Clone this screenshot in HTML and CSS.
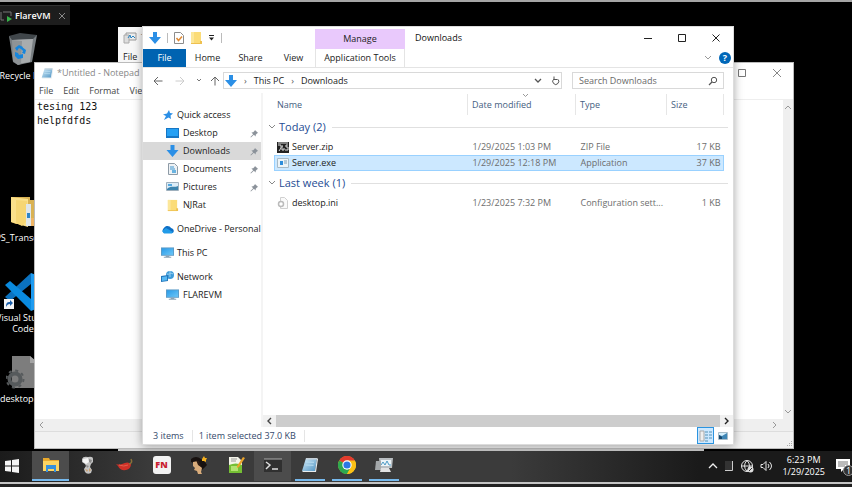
FILE: index.html
```html
<!DOCTYPE html>
<html lang="en">
<head>
<meta charset="utf-8">
<title>FlareVM</title>
<link rel="stylesheet" href="styles.css">
</head>
<body>
<svg class="defs" aria-hidden="true">
  <defs>
    <linearGradient id="sky" x1="0" y1="0" x2="1" y2="1"><stop offset="0" stop-color="#2a9be8"/><stop offset="1" stop-color="#6cc6f7"/></linearGradient>
    <linearGradient id="page" x1="0" y1="0" x2="1" y2="1"><stop offset="0" stop-color="#d5ecf8"/><stop offset="1" stop-color="#4f94c4"/></linearGradient>
    <symbol id="down" viewBox="0 0 12 12"><path d="M4 0h4v5h4L6 12 0 5h4z" fill="#2b8fe6"/></symbol>
    <symbol id="folder" viewBox="0 0 12 14"><path d="M1 1h10v12H1z" fill="#fbdc78"/><path d="M1 1h3v12H1z" fill="#fce79a"/><path d="M10 10h2v3H1v-1h9z" fill="#eec04f"/></symbol>
    <symbol id="pin" viewBox="0 0 10 10"><path d="M5.500 1 9 4.500l-1 .3-1.600 1.600-.2 2L4.300 6.500 1 9.500.5 9l3-3.300L1.600 3.800l2-.2L5.200 2z" fill="#8b929a"/></symbol>
    <symbol id="pc" viewBox="0 0 14 12"><path d="M0 0h14v9H0z" fill="#5c9bc7"/><path d="M1 1h12v7H1z" fill="url(#sky)"/><path d="M5 9h4v1h2v1H3v-1h2z" fill="#8aa2b5"/></symbol>
    <symbol id="note" viewBox="0 0 18 18"><path d="M5 2h11l-2 13H1z" fill="url(#page)"/><path d="m16 2 1 1-2 13H2l-1-1h13z" fill="#e8edf0"/><path d="M5 2h11v1.500H5z" fill="#c6d0d8"/><path d="m5 6 8 .3M4.500 9l8 .3" stroke="#b9def2" fill="none"/></symbol>
  </defs>
</svg>

<div class="screen">
  <div class="vmtab">
    <svg width="12" height="12" viewBox="0 0 12 12"><path d="M4 10H1V2m2 0h8v4" fill="none" stroke="#777"/><path d="m7 6 5 3-5 3z" fill="#37b34a"/></svg>
    <span>FlareVM</span>
    <button class="x" aria-label="Close tab"><svg width="8" height="8" viewBox="0 0 8 8"><path d="m1 1 6 6m0-6L1 7" stroke="#888"/></svg></button>
  </div>

  <main class="desktop">
    <a href="#" class="shortcut s-bin">
      <svg width="30" height="32" viewBox="0 0 30 32"><path d="m1 3 28-1-5 27-14 3-5-3z" fill="#777d81"/><path d="m1 3 11-3 17 2-4 4-21 1z" fill="#40464a"/><path d="m4 7 21-1-3 23-12 2z" fill="#a8acae"/><path d="m4 7 10 1-1 23-3 1-5-4z" fill="#8e9396"/><path d="m7 15 4-3 4 2-2 2-2-1-2 3zm7-1 4 3-1 4-3-1 1-2-2-2zm-7 5 3 1 1 2 4-1v4l-5 1-3-3z" fill="#1685dc"/></svg>
      <span>Recycle Bin</span>
    </a>
    <a href="#" class="shortcut s-ps">
      <svg width="26" height="32" viewBox="0 0 26 32"><path d="M1 1h19v3h4v24H6L1 26z" fill="#d9b254"/><path d="m1 1 17 2v28L1 26z" fill="#fbe08a"/><path d="m6 4 11 1v20l-5 5-6-3z" fill="#f6d674"/><path d="M16 8h5v22h-5z" fill="#dfe6ea"/><path d="M17 17h3v5h-3z" fill="#2d85c7"/><path d="M21 22h4v8h-4z" fill="#efb565"/></svg>
      <span>PS_Transcri...</span>
    </a>
    <a href="#" class="shortcut s-code">
      <svg width="38" height="38" viewBox="0 0 38 38"><path d="m27 0 10 4v30l-10 4z" fill="#1e9bf0"/><path d="M27 0v11L6 28l-5-4z" fill="#0b72bf"/><path d="m1 12 5-4 21 18v12z" fill="#0a8ade"/><path d="M0 26h10v10H0z" fill="#f4f4f4"/><path d="M2 34c0-4 1-5 4-5v-2l3 3-3 3v-2c-2 0-3 1-4 3z" fill="#1b5faa"/></svg>
      <span>Visual Studio Code</span>
    </a>
    <a href="#" class="shortcut s-ini">
      <svg width="34" height="34" viewBox="0 0 34 34"><path d="M6 0h18l8 7v25H6z" fill="#7d7d7d"/><path d="M24 0v7h8z" fill="#a4a4a4"/><g fill="none" stroke="#565a5c"><circle cx="9" cy="23" r="5.500" stroke-width="4"/><circle cx="9" cy="23" r="8.500" stroke-width="2" stroke-dasharray="3 3.670"/></g></svg>
      <span>desktop.ini</span>
    </a>

    <section class="window back" aria-label="Task window">
      <div class="back-title"><svg width="14" height="12" viewBox="0 0 14 12"><path d="M3 1h10v7H3z" fill="#eee" stroke="#999"/><path d="M1 3h5v8H1z" fill="#ddd" stroke="#aaa"/><path d="m5 6 2-3 1 3 2-2 2 2" stroke="#2785c3" fill="none"/></svg><span>Task Manager</span></div>
      <div class="back-menu">File</div>
    </section>

    <section class="window notepad" aria-label="Notepad">
      <header class="np-title">
        <svg width="13" height="13"><use href="#note"/></svg>
        <span class="grow">*Untitled - Notepad</span>
        <button class="ctl" aria-label="Maximize"><svg width="10" height="10" viewBox="0 0 10 10"><path d="M1.500 1.500h7v7h-7z" fill="none" stroke="#777"/></svg></button>
        <button class="ctl" aria-label="Close"><svg width="10" height="10" viewBox="0 0 10 10"><path d="m1 1 8 8m0-8L1 9" stroke="#888"/></svg></button>
      </header>
      <nav class="np-menu"><button>File</button><button>Edit</button><button>Format</button><button>View</button></nav>
      <div class="np-body">
        <textarea aria-label="Text" spellcheck="false">tesing 123
helpfdfds</textarea>
        <div class="np-vbar"><svg width="8" height="6" viewBox="0 0 8 6"><path d="m1 5 3-3 3 3" fill="none" stroke="#999"/></svg><svg width="8" height="6" viewBox="0 0 8 6"><path d="m1 1 3 3 3-3" fill="none" stroke="#999"/></svg></div>
      </div>
      <div class="np-hbar"><svg width="6" height="8" viewBox="0 0 6 8"><path d="M5 1 2 4l3 3" fill="none" stroke="#999"/></svg><svg width="6" height="8" viewBox="0 0 6 8"><path d="m1 1 3 3-3 3" fill="none" stroke="#999"/></svg></div>
      <div class="np-status"><svg width="7" height="7" viewBox="0 0 7 7"><path d="M5 0h1v1H5zM3 2h1v1H3zm2 0h1v1H5zM1 4h1v1H1zm2 0h1v1H3zm2 0h1v1H5z" fill="#aaa"/></svg></div>
    </section>

    <section class="window explorer" aria-label="Downloads">
      <header class="ex-title">
        <div class="quick">
          <svg width="12" height="12"><use href="#down"/></svg>
          <i class="bar"></i>
          <svg width="10" height="12" viewBox="0 0 10 12"><path d="M.5.5h6l3 3v8h-9z" fill="#fff" stroke="#8c8c8c"/><path d="m2.500 6 2 2.500L8 4.500" fill="none" stroke="#e08a34" stroke-width="1.500"/></svg>
          <svg width="12" height="14"><use href="#folder"/></svg>
          <svg class="more" width="7" height="6" viewBox="0 0 7 6"><path d="M1 0h5v1H1zm0 2.500h5L3.500 5.500z" fill="#222"/></svg>
          <i class="bar"></i>
        </div>
        <div class="manage">Manage</div>
        <h1>Downloads</h1>
        <button class="ctl" aria-label="Minimize"><svg width="10" height="10" viewBox="0 0 10 10"><path d="M1 5.500h8" stroke="#222"/></svg></button>
        <button class="ctl" aria-label="Maximize"><svg width="10" height="10" viewBox="0 0 10 10"><path d="M1.500 1.500h7v7h-7z" fill="none" stroke="#222"/></svg></button>
        <button class="ctl" aria-label="Close"><svg width="10" height="10" viewBox="0 0 10 10"><path d="m1.500 1.500 7 7m0-7-7 7" stroke="#222"/></svg></button>
      </header>
      <nav class="ribbon">
        <button class="file">File</button><button>Home</button><button>Share</button><button>View</button><button class="tools">Application Tools</button>
        <span class="grow"></span>
        <svg width="8" height="6" viewBox="0 0 8 6"><path d="m1 1 3 3 3-3" fill="none" stroke="#999"/></svg>
        <button class="help" aria-label="Help">?</button>
      </nav>
      <div class="address">
        <button aria-label="Back"><svg width="10" height="10" viewBox="0 0 10 10"><path d="M9.500 5H1m4-4L1 5l4 4" fill="none" stroke="#666"/></svg></button>
        <button aria-label="Forward"><svg width="10" height="10" viewBox="0 0 10 10"><path d="M.5 5H9M5 1l4 4-4 4" fill="none" stroke="#ccc"/></svg></button>
        <button class="slim" aria-label="Recent"><svg width="6" height="5" viewBox="0 0 6 5"><path d="m1 1 2 2 2-2" fill="none" stroke="#777"/></svg></button>
        <button class="slim" aria-label="Up"><svg width="10" height="10" viewBox="0 0 10 10"><path d="M5 9.500V1M1 5l4-4 4 4" fill="none" stroke="#666"/></svg></button>
        <div class="path">
          <svg width="12" height="12"><use href="#down"/></svg>
          <b>›</b><a href="#">This PC</a><b>›</b><a href="#">Downloads</a>
          <span class="grow"></span>
          <svg width="8" height="6" viewBox="0 0 8 6"><path d="m1 1 3 3 3-3" fill="none" stroke="#555" stroke-width="1.300"/></svg>
          <button class="reload" aria-label="Refresh"><svg width="9" height="10" viewBox="0 0 9 10"><path d="M6.500 3A3 3 0 1 1 3 3M3 .5v3h3" fill="none" stroke="#555"/></svg></button>
        </div>
        <label class="search"><input type="text" placeholder="Search Downloads" aria-label="Search Downloads"><svg width="10" height="10" viewBox="0 0 10 10"><circle cx="6" cy="4" r="2.700" fill="none" stroke="#555"/><path d="M4 6 1 9" stroke="#555" stroke-width="1.300"/></svg></label>
      </div>
      <div class="ex-body">
        <nav class="tree">
          <a href="#" class="top"><svg width="10" height="10" viewBox="0 0 10 10"><path d="m6 0 1 3 3 .5-2.500 2L8 9 5.500 7.500 1 10l2-4L0 4.500l4-1z" fill="#2b8fe6"/></svg>Quick access</a>
          <a href="#"><svg width="13" height="10" viewBox="0 0 13 10"><path d="M0 0h13v10H0z" fill="#1676c4"/><path d="M1 1h11v7H1z" fill="#25a0f4"/></svg>Desktop<svg class="pin" width="9" height="9"><use href="#pin"/></svg></a>
          <a href="#" class="on"><svg width="13" height="12"><use href="#down"/></svg>Downloads<svg class="pin" width="9" height="9"><use href="#pin"/></svg></a>
          <a href="#"><svg width="13" height="12" viewBox="0 0 13 12"><path d="M2.500.5h6l3 3v8h-9z" fill="#eef2f5" stroke="#8e9ba6"/><path d="M4 4h4M4 6h5" stroke="#3b95d1"/><path d="M6 7h4v3H6z" fill="#6ab3e0"/></svg>Documents<svg class="pin" width="9" height="9"><use href="#pin"/></svg></a>
          <a href="#"><svg width="13" height="10" viewBox="0 0 13 10"><path d="M.5.5h12v8H.5z" fill="#dcecf7" stroke="#9fb0bd"/><path d="M1 7c4-4 6-1 11-3v4H1z" fill="#3c83ad"/><path d="M2 2h4v2H2z" fill="#54a8df"/></svg>Pictures<svg class="pin" width="9" height="9"><use href="#pin"/></svg></a>
          <a href="#"><svg width="13" height="13"><use href="#folder"/></svg>NJRat</a>
          <a href="#" class="top gap"><svg width="13" height="9" viewBox="0 0 13 9"><path d="M3 8a3 3 0 0 1 0-5c2-3 6-2 7 0 4 1 3 5 1 5z" fill="#0f6fc5"/><path d="m1 6 4-3 7 4-1 1.500H3z" fill="#229be8"/></svg>OneDrive - Personal</a>
          <a href="#" class="top gap"><svg width="13" height="12"><use href="#pc"/></svg>This PC</a>
          <a href="#" class="top gap"><svg width="13" height="12" viewBox="0 0 13 12"><circle cx="9" cy="4" r="4" fill="#3e9bd9"/><path d="M6 3c3 1 3-2 6 0M9 0v6" stroke="#9dd2f1" fill="none"/><path d="m0 5 7-1v6l-7 1z" fill="#2477bb"/><path d="m1 6 5-.7v4L1 10z" fill="#56b8f3"/></svg>Network</a>
          <a href="#"><svg width="13" height="12"><use href="#pc"/></svg>FLAREVM</a>
        </nav>
        <div class="files">
          <table>
            <colgroup><col><col class="c-date"><col class="c-type"><col class="c-size"></colgroup>
            <thead><tr><th>Name</th><th><svg class="sorted" width="7" height="4" viewBox="0 0 7 4"><path d="m1 0 2.500 2.500L6 0" fill="none" stroke="#999"/></svg>Date modified</th><th>Type</th><th>Size</th></tr></thead>
            <tbody>
              <tr class="group"><td colspan="4"><div><svg width="8" height="6" viewBox="0 0 8 6"><path d="m1 1 3 3 3-3" fill="none" stroke="#888"/></svg><span>Today (2)</span><hr></div></td></tr>
              <tr><td><div><svg width="12" height="11" viewBox="0 0 12 11"><path d="M0 0h12v11H0z" fill="#222"/><path d="M1 3h3v3L2 9M6 4H5v4h2V6m4-3H9v2h2v3H8M1 1h10" fill="none" stroke="#ddd"/></svg>Server.zip</div></td><td>1/29/2025 1:03 PM</td><td>ZIP File</td><td>17 KB</td></tr>
              <tr class="sel"><td><div><svg width="12" height="10" viewBox="0 0 12 10"><path d="M.5.5h11v9H.5z" fill="#edf4f8" stroke="#a8bac6"/><path d="M3 3h3v4H3z" fill="#2e8ddb"/><path d="M7 3h3M7 5h3" stroke="#7f9fb5"/></svg>Server.exe</div></td><td>1/29/2025 12:18 PM</td><td>Application</td><td>37 KB</td></tr>
              <tr class="group"><td colspan="4"><div><svg width="8" height="6" viewBox="0 0 8 6"><path d="m1 1 3 3 3-3" fill="none" stroke="#888"/></svg><span>Last week (1)</span><hr></div></td></tr>
              <tr><td><div><svg width="12" height="12" viewBox="0 0 12 12"><path d="M3.500.5h4l3 3v8h-7z" fill="#fafafa" stroke="#d0d0d0"/><circle cx="4" cy="7" r="2.500" fill="#fff" stroke="#bbb" stroke-width="1.500"/></svg>desktop.ini</div></td><td>1/23/2025 7:32 PM</td><td>Configuration sett...</td><td>1 KB</td></tr>
            </tbody>
          </table>
          <div class="ex-hbar"><svg width="6" height="8" viewBox="0 0 6 8"><path d="M5 1 2 4l3 3" fill="none" stroke="#444" stroke-width="1.400"/></svg><i></i><svg width="6" height="8" viewBox="0 0 6 8"><path d="m1 1 3 3-3 3" fill="none" stroke="#222" stroke-width="1.400"/></svg></div>
        </div>
      </div>
      <footer class="ex-status">
        <span>3 items</span><span>1 item selected 37.0 KB</span><span class="grow"></span>
        <button class="view active" aria-label="Details view"><svg width="14" height="12" viewBox="0 0 14 12"><path d="M1 1h4v10H1z" fill="#eee" stroke="#aaa"/><path d="M6 2h3m1 0h3M6 5h3m1 0h3M6 8h3m1 0h3M6 11h3" stroke="#5592b5"/></svg></button>
        <button class="view" aria-label="Large icons view"><svg width="10" height="8" viewBox="0 0 10 8"><path d="M.5.500h9v7h-9z" fill="#d5effc" stroke="#a8bdc8"/><path d="m1 3 3 1 5-3v6H1z" fill="#3f86b5"/><path d="m1 3 3 2v2H1z" fill="#17486f"/></svg></button>
      </footer>
    </section>
  </main>

  <footer class="taskbar">
    <button class="start" aria-label="Start"><svg width="14" height="14" viewBox="0 0 14 14"><path d="m0 2 6-.8v5.300H0zM7 1l7-1v6.500H7zM0 7.500h6v5.300L0 12zm7 0h7V14l-7-1z" fill="#f5f5f5"/></svg></button>
    <button class="app focus run" aria-label="File Explorer"><svg width="18" height="14" viewBox="0 0 18 14"><path d="M1 0h6l1 2h9v11H1z" fill="#e9a92c"/><path d="M1 3h16v10H1z" fill="#fcd462"/><path d="M4 7h10v7h-2v-3H6v3H4z" fill="#3690dc"/></svg></button>
    <button class="app" aria-label="Bust"><svg width="14" height="18" viewBox="0 0 14 18"><path d="M1 3q1-3 6-2 5-1 5 2v3l-2 2-1 3 2 3-1 3q-4 2-6-1l-1-3 2-3-1-2-3-2z" fill="#c4c4c4"/><path d="m2 3 5-1 1 4-3 2-3-2z" fill="#f4f4f4"/><path d="m8 3 3 1-1 3-2-1zM5 9l3 1-2 2z" fill="#8a8a8a"/><path d="m4 13 3 1-1 2zm4-1 2 2-2 2z" fill="#c9a06f"/></svg></button>
    <button class="app" aria-label="Pepper"><svg width="18" height="14" viewBox="0 0 18 14"><path d="M0 6q3 1 6 0 6-3 9 0 0 5-5 6-6 1-8-4z" fill="#cf3128"/><path d="M3 7q5 2 9 0" stroke="#e2604c" fill="none"/><path d="M13 6q4-1 2-5" stroke="#89713a" stroke-width="1.500" fill="none"/></svg></button>
    <button class="app" aria-label="FN"><span class="fn">FN</span></button>
    <button class="app" aria-label="Portrait"><svg width="18" height="18" viewBox="0 0 18 18"><path d="M1 3q5-4 10 0l4 3 2 3-3 3-2 2-2-2-3 2-1-6-5-2z" fill="#17110f"/><path d="m3 6 5-1 1 4 3 3-1 4 1 2H8l-1-3-3-1 1-2-2-2z" fill="#d9ac7b"/><path d="M6 4q4 1 5 7L8 9z" fill="#2a1a12"/><path d="m14 0 1 2 2 0-1 2 0 2-2-1-2 0 0-2z" fill="#f5b11f"/></svg></button>
    <button class="app" aria-label="Notepad++"><svg width="18" height="18" viewBox="0 0 18 18"><path d="M2 1h9l4 4v12H2z" fill="#f4f4e9"/><path d="M2 9q7-3 13 0v8H2z" fill="#75bf34"/><path d="M4 10h7v5H4z" fill="#b2e270"/><path d="M4 3h6M4 5h5" stroke="#999"/><path d="m16 1 2 1-6 9-2 1v-2z" fill="#e9a32b"/></svg></button>
    <button class="app hot" aria-label="Terminal"><svg width="18" height="15" viewBox="0 0 18 15"><path d="M0 1h18v13H0z" fill="#303030"/><path d="M0 1h18" stroke="#aaa"/><path d="m2 4 4 3-4 4M8 11h6" fill="none" stroke="#ddd" stroke-width="1.500"/></svg></button>
    <button class="app run" aria-label="Notepad"><svg width="18" height="18"><use href="#note"/></svg></button>
    <button class="app run" aria-label="Chrome"><svg width="18" height="18" viewBox="0 0 18 18"><circle cx="9" cy="9" r="9" fill="#fbc116"/><path d="M9 9 1.200 4.500A9 9 0 0 1 16.800 4.500z" fill="#e33b2e"/><path d="M9 9 1.200 4.500A9 9 0 0 0 9 18l4-7z" fill="#2da94f"/><path d="M9 4.500h7.800A9 9 0 0 1 9 18l4-7z" fill="#fbc116"/><circle cx="9" cy="9" r="4.700" fill="#fff"/><circle cx="9" cy="9" r="3.600" fill="#2a78e4"/></svg></button>
    <button class="app run" aria-label="Monitor"><svg width="18" height="16" viewBox="0 0 18 16"><path d="M4 1h14l-1 10H5z" fill="#b9bec1"/><path d="M6 3h10v6H6z" fill="#edf4f7"/><path d="m6 8 2-3 2 3 2-4 2 4h2" fill="none" stroke="#4d9bc5"/><path d="M1 4h5v9H0z" fill="#a4a8aa"/><path d="M6 11h8l2 4H5z" fill="#e2e2e2"/></svg></button>
    <span class="grow"></span>
    <div class="tray">
      <svg width="10" height="8" viewBox="0 0 10 8"><path d="m1 6 4-4 4 4" fill="none" stroke="#eee" stroke-width="1.300"/></svg>
      <svg width="10" height="12" viewBox="0 0 10 12"><path d="M1 10.500h7.500V1" fill="none" stroke="#ccc"/><path d="M1 1h7v9H1z" fill="#333"/></svg>
      <svg width="14" height="14" viewBox="0 0 14 14"><g fill="none" stroke="#e5e5e5"><circle cx="7" cy="7" r="5.500"/><path d="M1.500 7h11M7 1.500q-5 5 0 11M7 1.500q5 5 0 11"/></g><circle cx="10.500" cy="10.500" r="3" fill="#ddd"/><path d="m9 12 3-3" stroke="#333"/></svg>
      <svg width="13" height="12" viewBox="0 0 13 12"><path d="M1 4.500h2l3-3v9l-3-3H1zM8 4q2 2 0 4m1.500-6q4 4 0 8" fill="none" stroke="#e5e5e5"/></svg>
      <time>6:23 PM<br>1/29/2025</time>
      <button class="notify" aria-label="1 notification"><svg width="14" height="14" viewBox="0 0 14 14"><path d="M0 0h14v10H8l-3 3v-3H0z" fill="#fff"/><path d="M2 3h10M2 5h10M2 7h7" stroke="#777"/></svg><span>1</span></button>
    </div>
  </footer>
</div>
</body>
</html>
```
FILE: styles.css
```css
* { box-sizing: border-box; }
body { margin: 0; background: #000; font: 9px/12px "Open Sans", "Noto Sans", sans-serif; color: #222; }
button { border: 0; padding: 0; background: none; font: inherit; color: inherit; display: flex; align-items: center; justify-content: center; }
a { color: inherit; text-decoration: none; }
svg { flex: none; display: block; }
.defs { position: absolute; width: 0; height: 0; }
.grow { flex: 1; }
.screen { min-height: 100vh; display: flex; flex-direction: column; border-top: 2px solid #a5a5a5; position: relative; overflow: hidden; }
.vmtab { position: absolute; top: 3px; left: 0; display: flex; align-items: center; gap: 3px; height: 20px; background: #1d1d1d; border-top: 1px solid #333; color: #fff; font-weight: 600; }
.vmtab .x { width: 16px; }
.desktop { flex: 1; position: relative; }

.shortcut { position: absolute; left: -14px; width: 74px; display: flex; flex-direction: column; align-items: center; gap: 4px; color: #fff; text-align: center; line-height: 11px; }
.s-bin { top: 31px; gap: 5px; }
.s-ps { top: 194px; }
.s-code { top: 271px; gap: 1px; }
.s-ini { top: 354px; gap: 3px; }

.window { position: absolute; background: #fff; display: flex; flex-direction: column; }
.back { left: 118px; right: 148px; top: 25px; bottom: 0; background: #c8c8c8; }
.back-title, .back-menu { background: #f7f7f7; display: flex; align-items: center; padding-left: 5px; }
.back-title { height: 22px; gap: 4px; color: #888; }
.back-menu { height: 16px; }

.notepad { left: 34px; right: 58px; top: 60px; bottom: 2px; border: 1px solid #bbb; }
.np-title { height: 20px; display: flex; align-items: center; padding-left: 6px; gap: 3px; color: #888; }
.np-title .ctl { width: 32px; }
.np-menu { height: 17px; display: flex; align-items: center; gap: 10px; padding-left: 4px; border-bottom: 1px solid #eee; color: #444; }
.np-body { flex: 1; display: flex; }
.np-body textarea { flex: 1; border: 0; padding: 0 2px; resize: none; outline: 0; font: 10px/14px "DejaVu Sans Mono", monospace; color: #111; }
.np-vbar { width: 10px; background: #efefef; display: flex; flex-direction: column; justify-content: space-between; align-items: center; padding: 4px 0; }
.np-hbar { height: 12px; background: #efefef; display: flex; justify-content: space-between; align-items: center; padding: 0 15px 0 3px; }
.np-status { height: 17px; background: #f1f1f1; border-top: 1px solid #ddd; display: flex; justify-content: flex-end; align-items: flex-end; }

.ctl { width: 34px; height: 20px; }
.explorer { left: 142px; right: 118px; top: 24px; bottom: 6px; border: 1px solid #dcdcdc; box-shadow: 0 1px 9px rgba(0, 0, 0, 0.35); }
.ex-title { display: flex; height: 22px; align-items: center; }
.quick { width: 172px; display: flex; align-items: center; gap: 6px; padding-left: 6px; }
.bar { width: 1px; height: 10px; background: #bbb; }
.manage { width: 90px; align-self: stretch; margin-top: 2px; background: #e9c9fc; display: flex; align-items: center; justify-content: center; }
.ex-title h1 { flex: 1; margin: 0; padding-left: 10px; font: inherit; color: #111; }
.ribbon { display: flex; height: 19px; align-items: stretch; border-bottom: 1px solid #e4e4e4; }
.ribbon > svg { align-self: center; }
.ribbon button { width: 43px; }
.ribbon .file { width: 43px; background: #0063b1; color: #fff; }
.ribbon .tools { width: 90px; border: solid #e4e4e4; border-width: 0 1px; }
.ribbon .help { width: 12px; height: 12px; border-radius: 6px; background: #0067b8; color: #fff; font-weight: 700; align-self: center; margin: 0 2px 0 7px; }
.address { display: flex; height: 25px; align-items: center; padding: 0 9px 0 4px; }
.address > button { width: 22px; height: 18px; }
.address > .slim { width: 16px; }
.path { flex: 1; height: 17px; border: 1px solid #d9d9d9; display: flex; align-items: center; gap: 7px; padding-left: 1px; white-space: nowrap; }
.path b { font-weight: 400; color: #555; }
.reload { align-self: stretch; width: 12px; }
.search { width: 152px; height: 17px; margin-left: 10px; border: 1px solid #d9d9d9; display: flex; align-items: center; padding: 0 5px 0 6px; }
.search input { flex: 1; min-width: 0; border: 0; padding: 0; outline: 0; font: inherit; }
.search input::placeholder { color: #6a6a6a; opacity: 1; }

.ex-body { flex: 1; display: flex; min-height: 0; }
.tree { width: 120px; padding-top: 13px; border-right: 2px solid #f4f4f4; white-space: nowrap; }
.tree a { display: flex; align-items: center; height: 18px; gap: 4px; padding-left: 23px; }
.tree .top { padding-left: 18px; gap: 3px; }
.tree .top:first-child { padding-left: 20px; gap: 4px; }
.tree .gap { margin-top: 6px; }
.tree .on { background: #d9d9d9; }
.tree .pin { margin: 0 2px 0 auto; }
.files { flex: 1; min-width: 0; display: flex; flex-direction: column; justify-content: space-between; }
table { table-layout: fixed; width: calc(100% - 20px); border-collapse: collapse; margin: 1px 9px 0 11px; }
.c-date { width: 108px; }
.c-type { width: 91px; }
.c-size { width: 57px; }
th { height: 21px; padding: 0 4px; font-weight: 400; text-align: left; color: #45607f; border-right: 1px solid #e6e6e6; position: relative; }
th:first-child { padding-left: 3px; }
.sorted { position: absolute; left: 50%; top: 0; }
td { height: 16px; padding: 0 5px; color: #6d6d6d; white-space: nowrap; }
td:first-child { padding-left: 3px; color: #222; }
td:last-child:not([colspan]) { text-align: right; padding-right: 3px; }
td div { display: flex; align-items: center; gap: 3px; }
.sel { background: #cce8ff; outline: 1px solid #99d1ff; outline-offset: -1px; }
.group td { height: 24px; }
.group td:first-child { padding: 0; }
.group div { margin: 0 -4px 0 -6px; gap: 3px; }
.group span { font-size: 11px; color: #1e4c94; }
.group hr { flex: 1; margin: 0 0 0 3px; border: 0; border-top: 1px solid #e0e0e0; }
.ex-hbar { height: 12px; display: flex; align-items: center; gap: 4px; padding: 0 3px; background: #f0f0f0; }
.ex-hbar i { flex: 1; align-self: stretch; background: #cdcdcd; }
.ex-status { height: 17px; display: flex; align-items: center; padding: 0 2px 0 10px; color: #34496b; }
.ex-status span:not(.grow) { padding-right: 8px; margin-right: 6px; border-right: 1px solid #e5e5e5; }
.view { width: 17px; height: 17px; }
.view.active { background: #cce8ff; border: 1px solid #2b94e0; }

.taskbar { height: 36px; display: flex; background: linear-gradient(90deg, #1b1b1b, #3b3b3b 18%, #3b3b3b 60%, #1a1a1a 82%); border-bottom: 3px solid #222; color: #fff; padding-bottom: 3px; position: relative; }
.taskbar::after { content: ""; position: absolute; left: 0; right: 0; bottom: 0; height: 2px; background: #c4c4c4; }
.start { width: 32px; padding-right: 8px; }
.app { width: 37px; border-bottom: 2px solid transparent; }
.focus, .hot { background: #4c4c4c; }
.run { background-image: linear-gradient(#76b9ed, #76b9ed); background-size: 30px 2px; background-position: center bottom; background-repeat: no-repeat; background-origin: border-box; background-clip: border-box; }
.focus { background-size: 100% 2px; }
.fn { width: 18px; height: 18px; border-radius: 3px; background: #f2f2f2; color: #c9202d; font-weight: 800; line-height: 18px; }
.tray { display: flex; align-items: center; gap: 6px; }
.tray time { text-align: center; margin-left: 3px; }
.notify { position: relative; margin: 0 2px 0 5px; }
.notify span { position: absolute; left: 7px; top: 6px; width: 11px; height: 11px; border-radius: 6px; background: #333; border: 1px solid #999; line-height: 9px; }
```
